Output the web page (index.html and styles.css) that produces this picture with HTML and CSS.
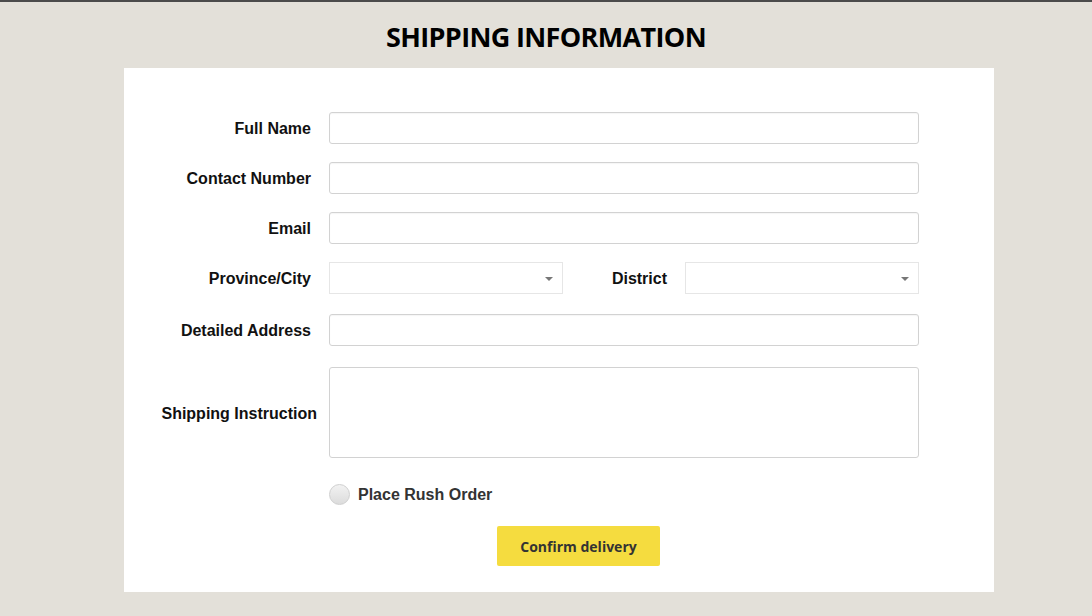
FILE: index.html
```html
<!DOCTYPE html>
<html>
<head>
<meta charset="utf-8">
<link rel="stylesheet" href="styles.css">
</head>
<body>
<div class="topline"></div>
<h1 class="title">SHIPPING INFORMATION</h1>
<div class="card">
  <form class="form">
    <label class="lbl">Full Name</label>
    <input class="field" type="text">
    <label class="lbl">Contact Number</label>
    <input class="field" type="text">
    <label class="lbl">Email</label>
    <input class="field" type="text">
    <label class="lbl">Province/City</label>
    <div class="split">
      <div class="select"><span class="caret"></span></div>
      <label class="lbl lbl-inline">District</label>
      <div class="select"><span class="caret"></span></div>
    </div>
    <label class="lbl row-tall">Detailed Address</label>
    <input class="field row-tall-f" type="text">
    <label class="lbl lbl-wide">Shipping Instruction</label>
    <textarea class="area"></textarea>
    <div></div>
    <div class="rush"><span class="radio"></span><span class="rush-text">Place Rush Order</span></div>
  </form>
  <div class="actions"><button class="btn" type="button">Confirm delivery</button></div>
</div>
</body>
</html>
```
FILE: styles.css
```css
html, body { margin: 0; padding: 0; }
body {
  background: #e3e0d9;
  width: 1092px;
  height: 616px;
  overflow: hidden;
  font-family: "Liberation Sans", Arial, sans-serif;
}
.topline { height: 2px; background: #4b4b4b; }
.title {
  margin: 0;
  height: 66px;
  line-height: 70px;
  text-align: center;
  font-family: "Open Sans", sans-serif;
  font-weight: 700;
  font-size: 27px;
  letter-spacing: -0.65px;
  color: #000;
}
.card {
  margin-left: 124px;
  width: 870px;
  height: 524px;
  background: #fff;
  box-sizing: border-box;
  padding-top: 44px;
}
.form {
  display: grid;
  grid-template-columns: 187px 590px;
  column-gap: 18px;
  row-gap: 18px;
  align-items: center;
}
.lbl {
  text-align: right;
  font-weight: 700;
  font-size: 16px;
  color: #111;
  white-space: nowrap;
  padding-top: 2px;
}
.lbl-wide { margin-right: -6px; padding-top: 6px; }
.field {
  box-sizing: border-box;
  height: 32px;
  width: 590px;
  border: 1px solid #d2d2d2;
  border-radius: 3px;
  margin: 0;
  padding: 0 8px;
  background: #fff;
  box-shadow: inset 0 1px 1px rgba(0,0,0,0.04);
}
.row-tall, .row-tall-f { margin-top: 2px; }
.split { display: flex; align-items: center; }
.select {
  position: relative;
  box-sizing: border-box;
  width: 234px;
  height: 32px;
  border: 1px solid #e6e6e6;
  background: #fff;
}
.caret {
  position: absolute;
  right: 9px;
  top: 14px;
  width: 0; height: 0;
  border-left: 4px solid transparent;
  border-right: 4px solid transparent;
  border-top: 4px solid #777;
}
.lbl-inline { width: 104px; margin-right: 18px; }
.area {
  box-sizing: border-box;
  width: 590px;
  height: 91px;
  margin: 3px 0 0 0;
  border: 1px solid #d2d2d2;
  border-radius: 3px;
  resize: none;
  padding: 6px;
}
.rush {
  display: flex;
  align-items: center;
  gap: 8px;
  margin-top: 8px;
}
.radio {
  width: 21px; height: 21px;
  border-radius: 50%;
  border: 1px solid #cfcfcf;
  background: linear-gradient(#f2f2f2, #dcdcdc);
  box-sizing: border-box;
}
.rush-text { font-weight: 700; font-size: 16px; color: #333; }
.actions { padding-left: 373px; margin-top: 21px; }
.btn {
  width: 163px;
  height: 40px;
  border: none;
  border-radius: 2px;
  background: #f5dc3f;
  font-family: "Open Sans", sans-serif;
  font-weight: 700;
  font-size: 14px;
  color: #333;
  padding: 0;
}
```
